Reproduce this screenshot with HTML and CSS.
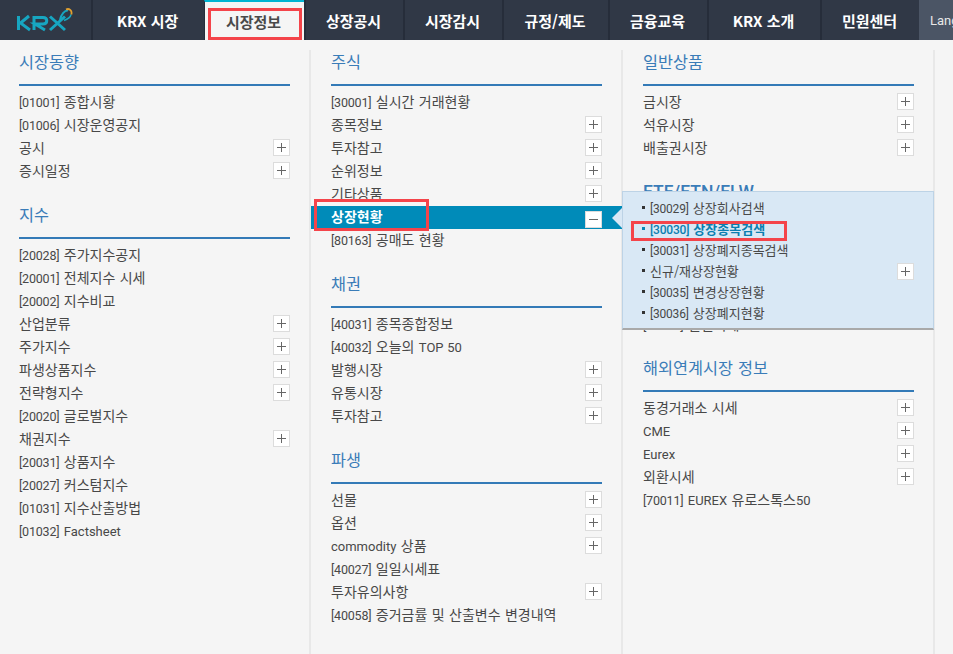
FILE: index.html
```html
<!DOCTYPE html>
<html lang="ko">
<head>
<meta charset="utf-8">
<title>KRX 시장정보</title>
<link rel="stylesheet" href="styles.css">
</head>
<body>
<header class="nav">
  <a class="logo" href="#" aria-label="KRX">
    <svg width="56" height="24" viewBox="0 0 56 24">
      <g fill="none" stroke="#17a6c1" stroke-width="3">
        <path d="M1.500 8V22M12 8 3.500 15 13 22"/>
        <path d="M17 22V9.500H26C31 9.500 31 16 26 16H18L28 22"/>
        <path d="M33 8.500 48 22M48 8.500 33 22"/>
      </g>
      <path d="M43 12C44 6 48 2 51 2.500" fill="none" stroke="#17a6c1" stroke-width="2"/>
      <path d="M54 6.500C53.500 9 50 11.500 47 12.500" fill="none" stroke="#17a6c1" stroke-width="1.500"/>
      <path d="M49 1.500C52 0 55.500 2.500 54.300 6.500" fill="none" stroke="#e0a030" stroke-width="1.800"/>
    </svg>
  </a>
  <a class="tab tab-l" href="#">KRX 시장</a>
  <a class="tab tab-active" href="#">시장정보</a>
  <a class="tab" href="#">상장공시</a>
  <a class="tab" href="#">시장감시</a>
  <a class="tab tab-m" href="#">규정/제도</a>
  <a class="tab" href="#">금융교육</a>
  <a class="tab tab-l" href="#">KRX 소개</a>
  <a class="tab" href="#">민원센터</a>
  <a class="lang" href="#">Language</a>
</header>

<main class="panel">
  <div class="col">
    <section class="group">
      <h2>시장동향</h2>
      <ul>
        <li><span class="code">[01001]</span> 종합시황</li>
        <li><span class="code">[01006]</span> 시장운영공지</li>
        <li class="more">공시</li>
        <li class="more">증시일정</li>
      </ul>
    </section>
    <section class="group">
      <h2>지수</h2>
      <ul>
        <li><span class="code">[20028]</span> 주가지수공지</li>
        <li><span class="code">[20001]</span> 전체지수 시세</li>
        <li><span class="code">[20002]</span> 지수비교</li>
        <li class="more">산업분류</li>
        <li class="more">주가지수</li>
        <li class="more">파생상품지수</li>
        <li class="more">전략형지수</li>
        <li><span class="code">[20020]</span> 글로벌지수</li>
        <li class="more">채권지수</li>
        <li><span class="code">[20031]</span> 상품지수</li>
        <li><span class="code">[20027]</span> 커스텀지수</li>
        <li><span class="code">[01031]</span> 지수산출방법</li>
        <li><span class="code">[01032]</span> <span class="lat">Factsheet</span></li>
      </ul>
    </section>
  </div>

  <div class="col">
    <section class="group">
      <h2>주식</h2>
      <ul>
        <li><span class="code">[30001]</span> 실시간 거래현황</li>
        <li class="more">종목정보</li>
        <li class="more">투자참고</li>
        <li class="more">순위정보</li>
        <li class="more">기타상품</li>
        <li class="more open">상장현황
          <div class="flyout">
            <ul>
              <li><span class="code">[30029]</span> 상장회사검색</li>
              <li class="current"><span class="code">[30030]</span> 상장종목검색</li>
              <li><span class="code">[30031]</span> 상장폐지종목검색</li>
              <li class="more">신규/재상장현황</li>
              <li><span class="code">[30035]</span> 변경상장현황</li>
              <li><span class="code">[30036]</span> 상장폐지현황</li>
            </ul>
          </div>
        </li>
        <li><span class="code">[80163]</span> 공매도 현황</li>
      </ul>
    </section>
    <section class="group">
      <h2>채권</h2>
      <ul>
        <li><span class="code">[40031]</span> 종목종합정보</li>
        <li><span class="code">[40032]</span> 오늘의 <span class="lat">TOP 50</span></li>
        <li class="more">발행시장</li>
        <li class="more">유통시장</li>
        <li class="more">투자참고</li>
      </ul>
    </section>
    <section class="group">
      <h2>파생</h2>
      <ul>
        <li class="more">선물</li>
        <li class="more">옵션</li>
        <li class="more"><span class="lat">commodity</span> 상품</li>
        <li><span class="code">[40027]</span> 일일시세표</li>
        <li class="more">투자유의사항</li>
        <li><span class="code">[40058]</span> 증거금률 및 산출변수 변경내역</li>
      </ul>
    </section>
  </div>

  <div class="col">
    <section class="group">
      <h2>일반상품</h2>
      <ul>
        <li class="more">금시장</li>
        <li class="more">석유시장</li>
        <li class="more">배출권시장</li>
      </ul>
    </section>
    <section class="group">
      <h2><span class="title-lat">ETF/ETN/ELW</span></h2>
      <ul>
        <li class="lat">ETF</li>
        <li class="lat">ETN</li>
        <li class="lat">ELW</li>
        <li class="lat">ETP</li>
        <li class="peek"><span class="code">[60001]</span> 일일시세</li>
      </ul>
    </section>
    <section class="group">
      <h2>해외연계시장 정보</h2>
      <ul>
        <li class="more">동경거래소 시세</li>
        <li class="more"><span class="lat">CME</span></li>
        <li class="more"><span class="lat">Eurex</span></li>
        <li class="more">외환시세</li>
        <li><span class="code">[70011]</span> <span class="lat">EUREX</span> 유로스톡스<span class="lat">50</span></li>
      </ul>
    </section>
  </div>
</main>

<span class="mark mark-tab"></span>
<span class="mark mark-row"></span>
<span class="mark mark-item"></span>
</body>
</html>
```

FILE: styles.css
```css
* { box-sizing: border-box; }
html, body { margin: 0; padding: 0; }
body {
  position: relative;
  width: 953px;
  height: 654px;
  overflow: hidden;
  background: #f5f5f5;
  color: #484848;
  font: 14px/23px "Noto Sans CJK KR", "Liberation Sans", sans-serif;
  word-spacing: 0.500px;
}
a { color: inherit; text-decoration: none; }
ul { list-style: none; margin: 0; padding: 0; }

.code { font: 12.500px/1 Roboto, "Liberation Sans", sans-serif; letter-spacing: -0.200px; }
.lat { font: 13px/1 Roboto, "Liberation Sans", sans-serif; }
.group li.lat { line-height: 25px; }
.group li.peek { line-height: 26px; }

.nav { display: flex; height: 40px; background: #303846; }
.logo { width: 91px; display: flex; align-items: center; padding: 0 0 0 17px; }
.tab {
  width: 99px;
  display: flex;
  align-items: center;
  justify-content: center;
  padding-right: 2px;
  border-left: 2px solid #262d3a;
  color: #fff;
  font-size: 15px;
  font-weight: 700;
  word-spacing: 0;
}
.tab-l { width: 113px; }
.tab-m { width: 106px; }
.tab-active {
  width: 100px;
  border-left: 1px solid #262d3a;
  border-top: 2px solid #00b4d2;
  background: #f5f5f5;
  color: #4a4a4a;
}
.lang {
  flex: 1;
  overflow: hidden;
  display: flex;
  align-items: center;
  padding-left: 11px;
  white-space: nowrap;
  background: #4b5565;
  color: #e8e8e8;
  font: 13px Roboto, sans-serif;
}

.panel {
  display: grid;
  grid-template-columns: repeat(3, 312px);
  height: 614px;
  margin-left: -1px;
  padding-top: 10px;
}
.col { padding: 0 19px 0 20px; border-right: 2px solid #e8e8e8; }

.group { margin-bottom: 22px; }
.group h2 {
  margin: 0 0 3px;
  height: 36px;
  border-bottom: 2px solid #337ab7;
  color: #3a7cb8;
  font-size: 16.300px;
  font-weight: 400;
  line-height: 23px;
}
.title-lat { font: 500 17.500px/1 Roboto, sans-serif; }
.group li { position: relative; height: 23px; line-height: 25px; white-space: nowrap; }

.more::after {
  content: "";
  position: absolute;
  top: 4px;
  right: 0;
  width: 15px;
  height: 15px;
  border: 1px solid #dcdcdc;
  background:
    linear-gradient(#666, #666) center / 9px 1px no-repeat,
    linear-gradient(#666, #666) center / 1px 9px no-repeat,
    #fff;
}

.group li.open {
  margin: 2px -20px -2px -20px;
  padding-left: 20px;
  background: #008bb9;
  color: #fff;
  font-weight: 700;
  line-height: 20px;
}
.group li.open::after {
  top: 5px;
  right: 20px;
  background:
    linear-gradient(#666, #666) center / 9px 1px no-repeat,
    #fff;
}
.group li.open::before {
  content: "";
  position: absolute;
  top: 2px;
  right: 0;
  border-style: solid;
  border-color: transparent #d9e8f5 transparent transparent;
  border-width: 10px 10px 10px 0;
}

.flyout {
  position: absolute;
  z-index: 2;
  top: -15px;
  left: 311px;
  width: 312px;
  height: 139px;
  padding: 5px 19px 0 19px;
  background: #d9e8f5;
  border: 1px solid #bdd3e6;
  border-bottom: 2px solid #a9a9a9;
  color: #484848;
  font-size: 13px;
  font-weight: 400;
}
.flyout .code { font-size: 12px; }
.group .flyout li { height: 21px; line-height: 21px; padding-left: 8px; }
.flyout li::before {
  content: "";
  position: absolute;
  top: 9px;
  left: 0;
  width: 3px;
  height: 3px;
  background: #333;
}
.flyout li.current { color: #0a7fb0; font-weight: 700; }
.flyout li.current .code { font-weight: 500; }
.flyout li.current::before { background: #0a86b5; }
.flyout .more::after { top: 3px; }

.mark { position: absolute; z-index: 3; border: 3px solid #f4444a; pointer-events: none; }
.mark-tab { left: 208px; top: 8px; width: 94px; height: 32px; }
.mark-row { left: 314px; top: 199px; width: 115px; height: 32px; }
.mark-item { left: 631px; top: 221px; width: 156px; height: 20px; }
```
